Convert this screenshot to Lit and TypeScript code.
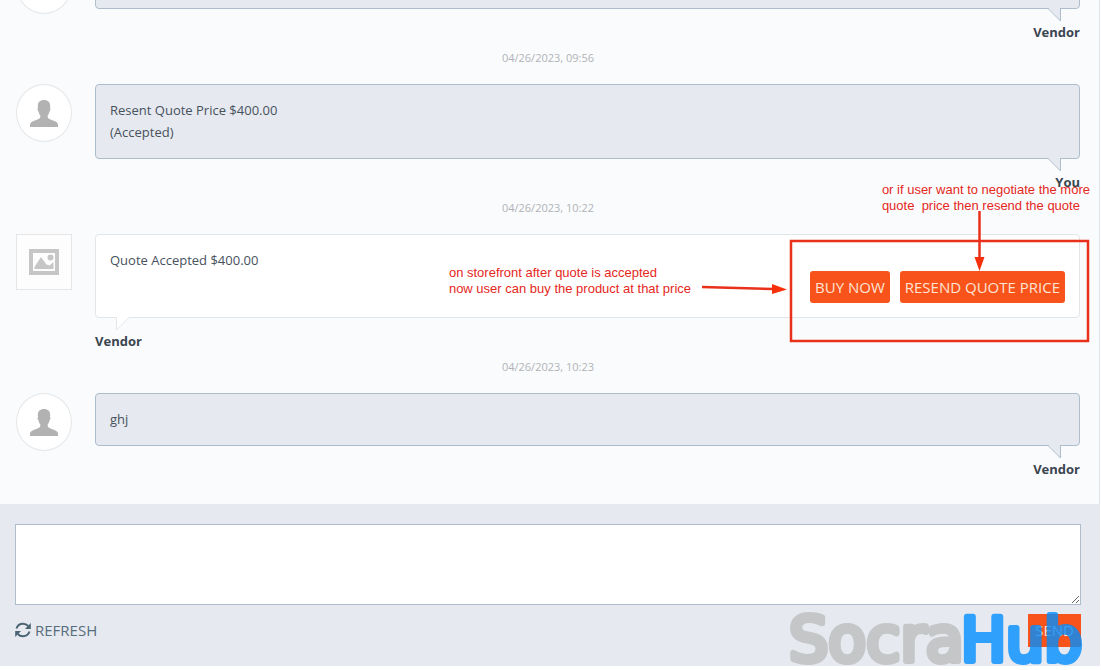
import { LitElement, html, css, svg, nothing } from "lit";
import { customElement, property } from "lit/decorators.js";

interface Message {
  side: "customer" | "vendor";
  author: string;
  lines: string[];
  date?: string;
  actions?: string[];
}

const MESSAGES: Message[] = [
  { side: "customer", author: "Vendor", lines: [] },
  {
    side: "customer",
    author: "You",
    date: "04/26/2023, 09:56",
    lines: ["Resent Quote Price $400.00", "(Accepted)"],
  },
  {
    side: "vendor",
    author: "Vendor",
    date: "04/26/2023, 10:22",
    lines: ["Quote Accepted $400.00"],
    actions: ["BUY NOW", "RESEND QUOTE PRICE"],
  },
  { side: "customer", author: "Vendor", date: "04/26/2023, 10:23", lines: ["ghj"] },
];

const personIcon = html`<svg class="person" viewBox="0 0 28 27" aria-hidden="true">
  <path
    d="M14 0c4 0 6.200 2.200 6.200 6.200 0 .8-.1 1.500-.2 2 .8.500.5 2.400-.5 3.200-.4 1.800-1 3-1.800 3.900v2c.4 1.600 2.600 2.300 5.300 3.200C26 21.500 28 22.500 28 24.600V27H0v-2.400c0-2.100 2-3.100 5-4.100 2.700-.9 4.900-1.600 5.300-3.200v-2c-.8-.9-1.400-2.100-1.800-3.900-1-.8-1.300-2.700-.5-3.200-.1-.5-.2-1.200-.2-2C7.800 2.200 10 0 14 0z"
  />
</svg>`;

const pictureIcon = html`<svg class="picture" viewBox="0 0 30 26" aria-hidden="true">
  <path fill-rule="evenodd" d="M0 0h30v26H0zM4 4v18h22V4z" />
  <path d="M5.500 20v-2L12 8l5.500 7.500 3 1 4-3.500v7z" />
  <circle cx="21.500" cy="8.500" r="3" />
</svg>`;

const refreshIcon = html`<svg class="refresh-icon" viewBox="0 0 16 16" aria-hidden="true">
  <path class="arc" d="M1.500 6.500C2.500 3.500 5 1.800 8 1.800c2 0 3.800.7 5.200 2.200M14.500 9.500c-1 3-3.500 4.700-6.500 4.700-2 0-3.800-.7-5.200-2.200" />
  <path d="M15.800 1v6H10zM.2 15V9H6z" />
</svg>`;

@customElement("chat-message")
export class ChatMessage extends LitElement {
  @property({ attribute: false }) message!: Message;

  static styles = css`
    :host {
      display: block;
    }
    .date {
      margin: 4px 0 15px;
      text-align: center;
      font-size: 11px;
      line-height: 22px;
      color: #b0b3b6;
    }
    .row {
      display: grid;
      grid-template-columns: 56px minmax(0, 1fr);
      column-gap: 23px;
      align-items: start;
    }
    .avatar {
      box-sizing: border-box;
      display: flex;
      align-items: center;
      justify-content: center;
      height: 58px;
      border: 1px solid #e4e6e8;
      border-radius: 50%;
      background: #fff;
    }
    .avatar.vendor {
      height: 56px;
      border-radius: 0;
      background: #fdfdfd;
    }
    .person {
      width: 28px;
      height: 27px;
      fill: #b2b2b2;
    }
    .picture {
      width: 30px;
      height: 26px;
      fill: #c6c6c6;
    }
    .bubble {
      position: relative;
      box-sizing: border-box;
      display: flex;
      justify-content: space-between;
      min-height: 53px;
      padding: 14px 14px 15px;
      border: 1px solid #adbdcb;
      border-radius: 4px;
      background: #e6e9f0;
    }
    .bubble.vendor {
      min-height: 84px;
      padding: 14px;
      border-color: #e3e6e9;
      background: #fff;
    }
    .tail {
      position: absolute;
      top: 100%;
      right: 18px;
      width: 14px;
      height: 14px;
      fill: #e6e9f0;
      stroke: #adbdcb;
    }
    .vendor .tail {
      right: auto;
      left: 20px;
      fill: #fff;
      stroke: #e3e6e9;
    }
    .text {
      margin: 0;
      font-size: 13px;
      line-height: 22px;
      color: #47525d;
    }
    .actions {
      display: flex;
      align-items: center;
      align-self: flex-end;
      gap: 10px;
    }
    .action {
      height: 32px;
      padding: 0 5px;
      border: 0;
      border-radius: 3px;
      background: #f8531b;
      color: #fde4d3;
      font: 15px/32px "Open Sans", sans-serif;
    }
    .author {
      margin-top: 12px;
      font-size: 13px;
      font-weight: 700;
      line-height: 22px;
      text-align: right;
      color: #3a4550;
    }
    .author.vendor {
      text-align: left;
    }
  `;

  render() {
    const { side, author, lines, date, actions } = this.message;
    const vendor = side === "vendor";
    return html`
      ${date ? html`<div class="date">${date}</div>` : nothing}
      <div class="row">
        <div class="avatar ${side}">${vendor ? pictureIcon : personIcon}</div>
        <div>
          <div class="bubble ${side}">
            <div>${lines.map((line) => html`<p class="text">${line}</p>`)}</div>
            ${actions
              ? html`<div class="actions">
                  ${actions.map((a) => html`<button class="action" type="button">${a}</button>`)}
                </div>`
              : nothing}
            <svg class="tail" viewBox="0 0 14 14" overflow="visible" aria-hidden="true">
              ${vendor
                ? svg`<path stroke="none" d="M0-1h14v1L.5 13z" /><path fill="none" d="M.5 0v13L13.500 0" />`
                : svg`<path stroke="none" d="M0-1h14V13L1 0z" /><path fill="none" d="M.5 0l13 13V0" />`}
            </svg>
          </div>
          <div class="author ${side}">${author}</div>
        </div>
      </div>
    `;
  }
}

@customElement("app-root")
export class AppRoot extends LitElement {
  static styles = css`
    :host {
      position: relative;
      box-sizing: border-box;
      display: flex;
      flex-direction: column;
      height: 100vh;
      padding-bottom: 4px;
      overflow: hidden;
      background: #fff;
      font-family: "Open Sans", sans-serif;
    }
    .thread {
      flex: 1;
      min-height: 0;
      display: flex;
      flex-direction: column;
      justify-content: flex-end;
      margin-right: 1px;
      padding: 0 19px 24px 16px;
      border-right: 1px solid #e1e5ea;
      background: #fafbfd;
    }
    .composer {
      display: flex;
      flex-direction: column;
      gap: 9px;
      margin-right: 1px;
      padding: 20px 19px 19px 15px;
      background: #e6e9f0;
    }
    .field {
      box-sizing: border-box;
      display: block;
      width: 100%;
      height: 81px;
      padding: 8px;
      border: 1px solid #adbdcb;
      outline: 0;
      background: #fff;
      font: 13px/22px "Open Sans", sans-serif;
    }
    .toolbar {
      display: flex;
      align-items: flex-start;
      justify-content: space-between;
    }
    .refresh {
      display: flex;
      align-items: center;
      gap: 4px;
      color: #566d7c;
      font-size: 15px;
      line-height: 32px;
      text-decoration: none;
    }
    .refresh-icon {
      width: 16px;
      height: 16px;
      fill: #4b6474;
    }
    .arc {
      fill: none;
      stroke: #4b6474;
      stroke-width: 2;
    }
    .send {
      height: 33px;
      padding: 0 7px;
      border: 0;
      background: #f8531b;
      color: #fde4d3;
      font: 15px/33px "Open Sans", sans-serif;
    }
    .note {
      position: absolute;
      margin: 0;
      color: #e5281c;
      font: 13px/16px "Liberation Sans", sans-serif;
      white-space: pre;
    }
    .note-buy {
      top: 265px;
      right: 410px;
    }
    .note-resend {
      top: 182px;
      right: 11px;
    }
    .marks {
      position: absolute;
      top: 182px;
      right: 0;
      width: 401px;
      height: 168px;
      pointer-events: none;
    }
    .line {
      fill: none;
      stroke: #e9301a;
      stroke-width: 2.5;
    }
    .head {
      fill: #f5300a;
    }
    .watermark {
      position: absolute;
      right: 16px;
      bottom: 0;
      width: 300px;
      height: 66px;
      overflow: visible;
      pointer-events: none;
    }
    .word {
      font: 60px "DejaVu Sans", sans-serif;
      stroke-width: 6;
      stroke-linejoin: round;
    }
    .gray {
      font-size: 62px;
      fill: #c5c6c7;
      stroke: #c5c6c7;
    }
    .blue {
      fill: #028eff;
      stroke: #028eff;
    }
  `;

  render() {
    return html`
      <main class="thread">
        ${MESSAGES.map((m) => html`<chat-message .message=${m}></chat-message>`)}
      </main>
      <form class="composer">
        <textarea class="field" aria-label="Message"></textarea>
        <div class="toolbar">
          <a class="refresh" href="#">${refreshIcon}REFRESH</a>
          <button class="send" type="button">SEND</button>
        </div>
      </form>

      <p class="note note-buy">on storefront after quote is accepted
now user can buy the product at that price</p>
      <p class="note note-resend">or if user want to negotiate the more
quote  price then resend the quote</p>
      <svg class="marks" viewBox="0 0 401 168" aria-hidden="true">
        <rect class="line" x="91" y="59" width="297" height="100" />
        <path class="line" d="M279.500 29v48M2 105l72 2" />
        <path class="head" d="M274.500 75h10l-5 14zM72 102v10l15-4.500z" />
      </svg>
      <svg class="watermark" viewBox="0 0 300 66">
        <text class="word gray" x="4" y="57">Socra</text>
        <g opacity="0.8"><text class="word blue" x="176" y="57">Hub</text></g>
      </svg>
    `;
  }
}
